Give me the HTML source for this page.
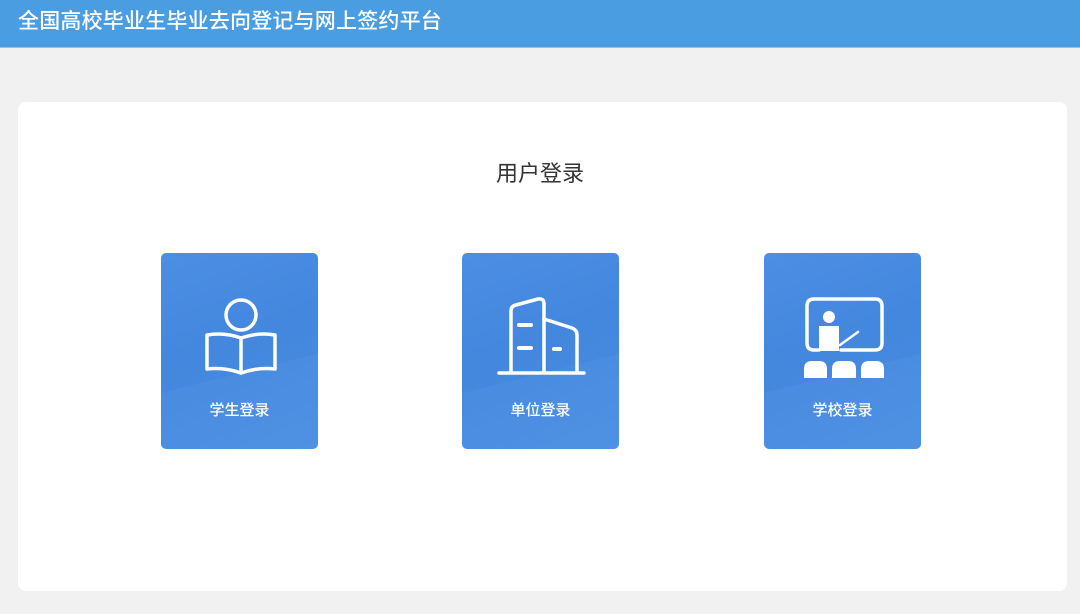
<!DOCTYPE html>
<html><head><meta charset="utf-8">
<style>
*{margin:0;padding:0;box-sizing:border-box}
body{width:1080px;height:614px;background:#f1f1f1;font-family:"Liberation Sans","Noto Sans CJK SC",sans-serif;position:relative;overflow:hidden}
.hdr{position:absolute;left:0;top:0;width:1080px;height:48px;background:#4a9de0;border-bottom:1px solid #8fc3ef}
.hdr span{position:absolute;left:18px;top:8px;color:#fff;font-size:21px;line-height:28px;letter-spacing:0.2px;font-weight:500}
.panel{position:absolute;left:18px;top:102px;width:1049px;height:489px;background:#fff;border-radius:8px}
.t{position:absolute;left:0;width:1080px;top:160px;text-align:center;font-size:22px;color:#333;line-height:28px}
.card{position:absolute;top:253px;width:157px;height:196px;border-radius:5px;background:linear-gradient(160deg,#4c8ee4 0%,#4387de 45%,#4a8ee2 100%);overflow:hidden}
.card:after{content:"";position:absolute;left:-40px;top:120px;width:260px;height:160px;background:rgba(255,255,255,0.03);transform:rotate(-14deg)}
.card svg{position:absolute;left:0;top:0}
.card .l{position:absolute;left:0;width:157px;top:148px;text-align:center;color:#fff;font-size:15px;line-height:20px;font-weight:500}
</style></head><body>
<div class="hdr"><span>全国高校毕业生毕业去向登记与网上签约平台</span></div>
<div class="panel"></div>
<div class="t">用户登录</div>

<div class="card" style="left:161px">
<svg width="157" height="196" viewBox="0 0 157 196" fill="none" stroke="#fff" stroke-width="3.5" stroke-linejoin="round" stroke-linecap="round">
<circle cx="80" cy="62" r="15"/>
<path d="M46 82 L46 116 Q63 114 80 120 Q97 114 114 116 L114 82 Q97 79 80 85 Q63 79 46 82 Z"/>
<path d="M80 85 L80 120"/>
</svg>
<div class="l">学生登录</div></div>

<div class="card" style="left:462px">
<svg width="157" height="196" viewBox="0 0 157 196" fill="none" stroke="#fff" stroke-width="3.5" stroke-linejoin="round" stroke-linecap="round">
<path d="M49 119 L49 58 Q49 53 54 52 L76 46 Q82 45 82 51 L82 119"/>
<path d="M82 66 L110 75 Q115 77 115 82 L115 119"/>
<path d="M37 120 L122 120"/>
<path d="M57 72 L69 72 M57 95 L69 95 M92 96 L98 96" stroke-width="4"/>
</svg>
<div class="l">单位登录</div></div>

<div class="card" style="left:764px">
<svg width="157" height="196" viewBox="0 0 157 196" fill="none" stroke="#fff" stroke-width="3.5" stroke-linejoin="round" stroke-linecap="round">
<path d="M55 97 L50 97 Q43 97 43 90 L43 53 Q43 46 50 46 L111 46 Q118 46 118 53 L118 90 Q118 97 111 97 L77 97"/>
<circle cx="65" cy="64" r="6" fill="#fff" stroke="none"/>
<path d="M55 73 L75 73 L75 98 L55 98 Z" fill="#fff" stroke="none"/>
<path d="M76 92 L94 79" stroke-width="2.5"/>
<path d="M40 125 L40 116 Q40 108 48 108 L55 108 Q63 108 63 116 L63 125 Z M68 125 L68 116 Q68 108 76 108 L84 108 Q92 108 92 116 L92 125 Z M97 125 L97 116 Q97 108 105 108 L112 108 Q120 108 120 116 L120 125 Z" fill="#fff" stroke="none"/>
</svg>
<div class="l">学校登录</div></div>
</body></html>
